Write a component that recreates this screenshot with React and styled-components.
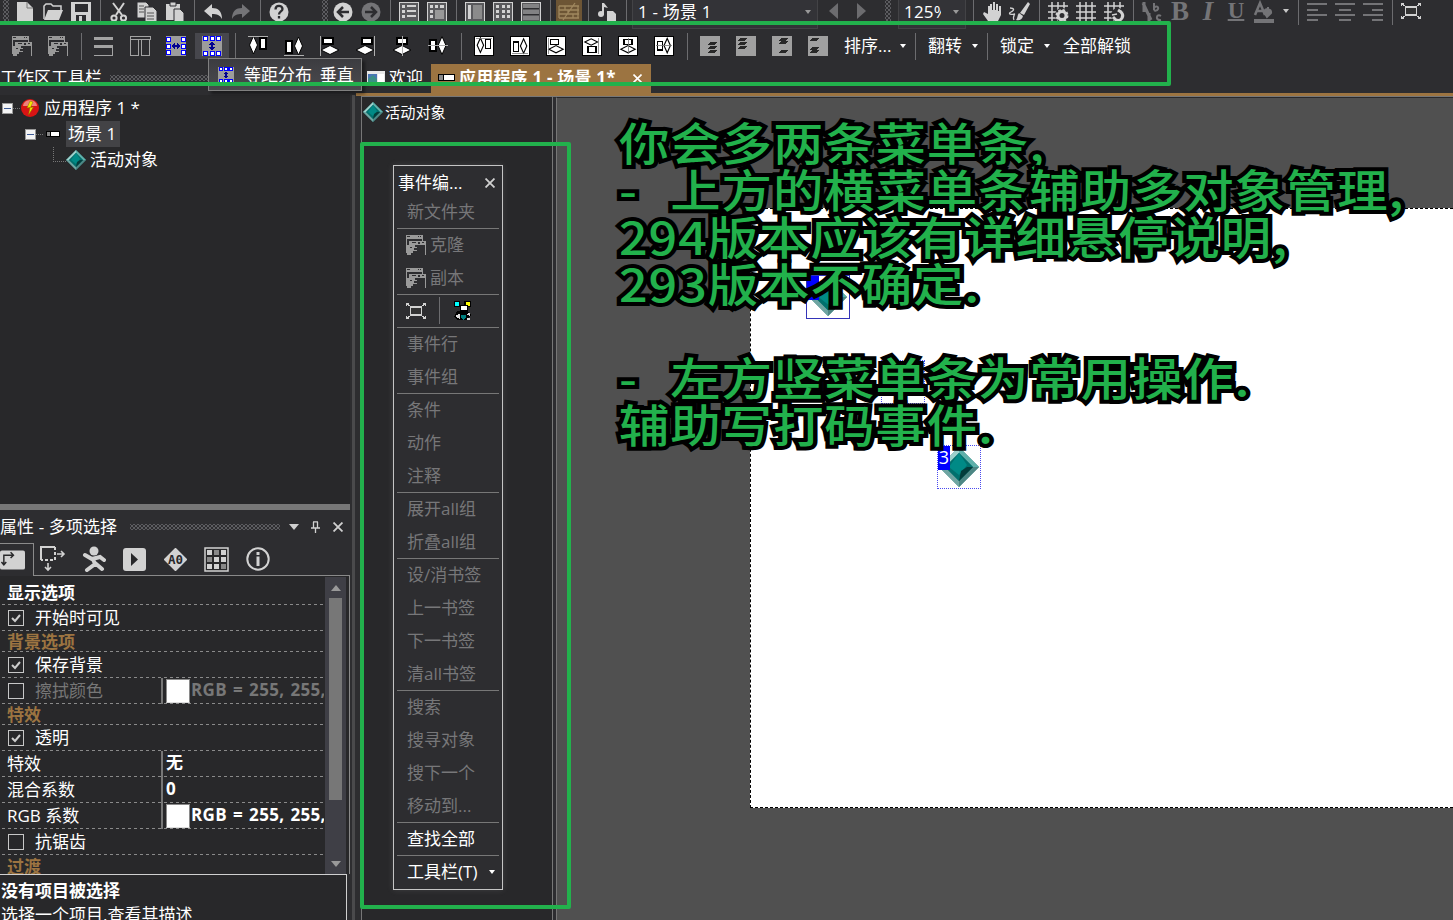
import React from 'react';
import styled, { createGlobalStyle, css } from 'styled-components';

const Global = createGlobalStyle`
  * { box-sizing: border-box; }
  html, body { margin: 0; padding: 0; overflow: hidden; }
  body {
    background: #2d2d30;
    color: #fff;
    font: 17px/24px "Open Sans", "Noto Sans CJK SC", sans-serif;
  }
`;

const GREEN = '#22b14c';
const LINE = '#777777';

const Window = styled.div`
  position: relative;
  width: 1453px;
  height: 920px;
  overflow: hidden;
  display: flex;
  flex-direction: column;
  background: #2d2d30;
  white-space: nowrap;
`;

/* ---------- toolbars ---------- */

const MainToolbar = styled.div`
  display: flex;
  align-items: center;
  gap: 8px;
  height: 26px;
  padding: 0 0 4px 3px;
  flex: none;
`;
const AlignToolbar = styled.div`
  display: flex;
  align-items: center;
  gap: 16px;
  height: 38px;
  padding: 2px 0 0 12px;
  flex: none;
`;
const sepMargins = { wide: '0 -4px', menu: '0 -4px 0 -8px', palette: '0 9px 0 8px' };
const Sep = styled.i`
  flex: none;
  width: 2px;
  height: 27px;
  border-right: 1px solid #6c6c6f;
  margin: ${(p) => sepMargins[p.$kind] || 0};
`;
const dots = css`
  background-image: radial-gradient(#5c5c60 0.8px, transparent 1px), radial-gradient(#5c5c60 0.8px, transparent 1px);
  background-size: 4px 4px;
  background-position: 0 0, 2px 2px;
`;
const Grip = styled.i`
  flex: none;
  width: 6px;
  height: 26px;
  margin-right: ${(p) => p.$after || 0}px;
  margin-left: ${(p) => p.$before || 0}px;
  ${dots}
`;
const Slot = styled.span`
  flex: none;
  display: flex;
  align-items: center;
  justify-content: center;
  width: 20px;
  height: 20px;
  ${(p) =>
    p.$active &&
    css`
      width: 34px;
      height: 26px;
      margin: 0 -7px;
      background: #47474d;
    `}
  ${(p) =>
    p.$pressed &&
    css`
      width: 26px;
      height: 24px;
      margin: 0 -3px;
      background: #6d5535;
    `}
  svg { display: block; flex: none; overflow: visible; }
`;
const Combo = styled.div`
  flex: none;
  display: flex;
  align-items: center;
  justify-content: space-between;
  width: ${(p) => p.$width}px;
  height: 30px;
  margin: 5px ${(p) => p.$after || 0}px 0 ${(p) => p.$before || 0}px;
  padding: 0 6px 3px 5px;
  border: 1px solid #434346;
  background: #333337;
`;
const ComboText = styled.span`
  overflow: hidden;
  letter-spacing: 0.2px;
  max-width: ${(p) => p.$clip || 200}px;
`;
const Caret = styled.i`
  flex: none;
  width: 0;
  border: ${(p) => p.$size || 3}px solid transparent;
  border-bottom: 0;
  border-top: ${(p) => p.$h || 4}px solid ${(p) => p.$color || '#fff'};
  margin: 0 ${(p) => p.$after || 0}px 0 ${(p) => p.$gap || 0}px;
`;
const Arrow = styled.i`
  flex: none;
  border: 8px solid transparent;
  border-${(p) => p.$side}: 9px solid #6c6c6f;
  border-${(p) => (p.$side === 'right' ? 'left' : 'right')}: 0;
  margin: 0 ${(p) => p.$after}px 0 ${(p) => p.$before}px;
`;
const MenuButton = styled.span`
  flex: none;
  display: flex;
  align-items: center;
  width: ${(p) => p.$width}px;
  margin-left: ${(p) => p.$shift || 0}px;
  justify-content: space-between;
`;
const Letter = styled.span`
  width: 20px;
  height: 24px;
  text-align: center;
  font: ${(p) => p.$italic && 'italic'} bold 27px/24px "Liberation Serif", serif;
  text-decoration: ${(p) => (p.$under ? 'underline' : 'none')};
  text-decoration-thickness: 2px;
  font-size: ${(p) => (p.$under ? 23 : 27)}px;
  color: #747477;
`;

/* ---------- body ---------- */

const Body = styled.div`
  display: flex;
  flex: 1;
  min-height: 0;
`;
const LeftDock = styled.div`
  width: 356px;
  flex: none;
  display: flex;
  flex-direction: column;
`;
const DockTitle = styled.div`
  height: 31px;
  display: flex;
  align-items: center;
  padding-bottom: 4px;
  gap: 8px;
`;
const Dots = styled.i`
  width: ${(p) => p.$width}px;
  height: 6px;
  ${dots}
`;
const DockBody = styled.div`
  display: flex;
  flex-direction: column;
  flex: 1;
  min-height: 0;
  padding-right: 2px;
  margin-right: 1px;
  border-right: 3px solid #4a4a4c;
`;
const Tree = styled.div`
  height: 409px;
  flex: none;
  background: #28282a;
`;
const TreeRow = styled.div`
  display: flex;
  align-items: center;
  height: 26px;
  padding-left: ${(p) => p.$indent}px;
`;
const TreeText = styled.span`
  padding: 0 4px 0 2px;
  margin-left: ${(p) => (p.$selected ? 3 : 2)}px;
  height: 26px;
  line-height: 25px;
  background: ${(p) => (p.$selected ? '#434346' : 'none')};
`;
const Expander = styled.i`
  width: 11px;
  height: 11px;
  border: 1px solid #999;
  background: linear-gradient(#3c5a96, #3c5a96) center / 7px 1px no-repeat, #f4f4f4;
`;
const Dotted = styled.i`
  width: ${(p) => p.$w}px;
  border-top: 1px dotted #777;
`;
const Elbow = styled.i`
  width: 13px;
  height: 15px;
  margin-top: -12px;
  border: dotted #777;
  border-width: 0 0 1px 1px;
`;
const TreeIcon = styled.span`
  display: flex;
  justify-content: center;
  width: 20px;
`;
const Splitter = styled.div`
  height: 6px;
  flex: none;
  background: #777;
`;
const PropTitle = styled.div`
  height: 33px;
  flex: none;
  display: flex;
  align-items: center;
  letter-spacing: 0.1px;
`;
const TitleTools = styled.span`
  display: flex;
  align-items: center;
  gap: 13px;
  margin-left: auto;
  padding-right: 7px;
`;
const PropTabs = styled.div`
  height: 33px;
  flex: none;
  display: flex;
  align-items: flex-end;
`;
const PropTab = styled.span`
  width: ${(p) => (p.$first ? 34 : 41)}px;
  height: 33px;
  display: flex;
  align-items: center;
  justify-content: center;
  border: solid #8a8a8a;
  border-width: ${(p) => (p.$first ? '1px 1px 0 0' : '0 0 1px 0')};
  padding-right: ${(p) => (p.$first ? 8 : 4)}px;
`;
const TabRest = styled.span`
  flex: 1;
  height: 33px;
  border-bottom: 1px solid #8a8a8a;
`;
const PropArea = styled.div`
  height: 298px;
  flex: none;
  display: flex;
  background: #28282a;
  border-right: 1px solid #8a8a8a;
  padding-top: 1px;
  overflow: hidden;
`;
const PropList = styled.div`
  width: 324px;
  overflow: hidden;
  padding: 3px 0 0 2px;
`;
const PropRow = styled.div`
  display: flex;
  align-items: center;
  height: ${(p) => p.$h}px;
  padding-left: 5px;
  background: repeating-linear-gradient(90deg, #8a8a8a 0 3px, transparent 3px 6px) bottom left / 100% 1px no-repeat;
  color: ${(p) => p.$color || '#fff'};
  font-weight: ${(p) => (p.$head ? 700 : 400)};
`;
const PropName = styled.span`
  width: ${(p) => (p.$check ? 126 : 154)}px;
  flex: none;
`;
const Check = styled.i`
  width: 16px;
  height: 16px;
  margin: 0 11px 0 1px;
  flex: none;
  border: 1px solid #c8c8c8;
  svg { display: block; }
`;
const PropValue = styled.span`
  display: flex;
  align-items: center;
  height: 26px;
  padding: 0 0 2px 3px;
  border-left: 2px solid #777;
  font-weight: 700;
  letter-spacing: 0.3px;
  word-spacing: 1.4px;
  flex: 1;
  overflow: hidden;
`;
const Swatch = styled.i`
  width: 24px;
  height: 24px;
  flex: none;
  margin: 2px 1px 0 0;
  background: #fff;
  border: 1px solid #8a8a8a;
  border-bottom-color: #ddd;
`;
const ScrollBar = styled.div`
  width: 21px;
  margin-left: 1px;
  background: #3f3f46;
  display: flex;
  flex-direction: column;
  align-items: center;
  padding: 8px 0;
`;
const Thumb = styled.div`
  width: 13px;
  height: 202px;
  margin: 7px 0 61px;
  flex: none;
  background: #777;
`;
const ArrowUp = styled.i`
  border: 5px solid transparent;
  border-top: 0;
  border-bottom: 6px solid #999;
`;
const Help = styled.div`
  flex: 1;
  width: 347px;
  border: solid #d0d0d0;
  border-width: 1px 1px 0 0;
  background: #28282a;
  padding: 4px 0 0 1px;
`;
const HelpTitle = styled.div`
  font-weight: 700;
  height: 24px;
`;

/* ---------- documents ---------- */

const Documents = styled.div`
  flex: 1;
  min-width: 0;
  display: flex;
  flex-direction: column;
`;
const Tabs = styled.div`
  height: 32px;
  flex: none;
  display: flex;
  border-bottom: 3px solid #9c7441;
`;
const Tab = styled.div`
  display: flex;
  align-items: center;
  width: ${(p) => p.$width}px;
  padding: 0 9px 1px ${(p) => (p.$active ? 7 : 11)}px;
  gap: 4px;
  background: ${(p) => (p.$active ? '#9c7441' : 'none')};
  font-weight: ${(p) => (p.$active ? 700 : 400)};
  letter-spacing: ${(p) => (p.$active ? 0.2 : 0)}px;
  svg { flex: none; }
`;
const TabClose = styled.span`
  margin-left: auto;
  display: flex;
`;
const Panes = styled.div`
  display: flex;
  flex: 1;
  border-top: 1px solid ${LINE};
  margin-left: 5px;
`;
const ObjectPane = styled.div`
  width: 192px;
  flex: none;
  border: solid ${LINE};
  border-width: 0 1px;
  background: #28282a;
`;
const ObjectItem = styled.div`
  display: flex;
  align-items: center;
  gap: 2px;
  height: 30px;
  padding-left: 1px;
  font-size: 15.2px;
`;
const Canvas = styled.div`
  flex: 1;
  margin-left: 3px;
  border-left: 1px solid ${LINE};
  border-top: 1px solid #29292b;
  background: #505050;
  padding: 110px 0 0 193px;
`;
const Frame = styled.div`
  position: relative;
  height: 600px;
  background: #fff;
  border: 1px dashed #000;
  border-right: 0;
`;
const Actor = styled.div`
  position: absolute;
  left: ${(p) => p.$x}px;
  top: ${(p) => p.$y}px;
  width: 44px;
  height: 44px;
  display: flex;
  align-items: center;
  justify-content: center;
  border: 1px ${(p) => (p.$strong ? 'solid #3434b8' : 'dotted #4a4aef')};
`;
const ActorNumber = styled.b`
  position: absolute;
  left: 0;
  top: 0;
  width: 12px;
  height: 24px;
  background: #0000ff;
  font: 18px/23px "Open Sans", sans-serif;
  text-align: center;
`;

/* ---------- floating parts ---------- */

const Tooltip = styled.div`
  position: absolute;
  left: 208px;
  top: 58px;
  width: 154px;
  height: 33px;
  display: flex;
  align-items: center;
  gap: 10px;
  padding-left: 9px;
  border: 1px solid #808080;
  background: linear-gradient(#3c3c40, #4a4a4e);
  box-shadow: 3px 3px 3px rgba(0, 0, 0, 0.4);
  white-space: pre;
  word-spacing: -0.5px;
`;
const Palette = styled.div`
  position: absolute;
  left: 393px;
  top: 165px;
  width: 110px;
  height: 725px;
  padding: 3px 3px 0;
  border: 1px solid #c4c4c4;
  background: #2d2d30;
  box-shadow: 0 0 6px rgba(160, 160, 160, 0.2);
`;
const PaletteTitle = styled.div`
  display: flex;
  align-items: center;
  justify-content: space-between;
  height: 28px;
  padding: 0 4px 0 1px;
`;
const PaletteItem = styled.div`
  display: flex;
  align-items: center;
  gap: 4px;
  height: ${(p) => (p.$first ? 31 : 33)}px;
  padding: 0 0 ${(p) => (p.$first ? 2 : 1)}px ${(p) => (p.$icon ? 9 : 10)}px;
  border-top: 1px solid ${(p) => (p.$line ? LINE : 'transparent')};
  color: ${(p) => (p.$on ? '#fff' : '#777779')};
`;
const Mark = styled.div`
  position: absolute;
  left: ${(p) => p.$x}px;
  top: ${(p) => p.$y}px;
  width: ${(p) => p.$w}px;
  height: ${(p) => p.$h}px;
  border: 4px solid ${GREEN};
  border-radius: 2px;
`;
const Note = styled.div`
  position: absolute;
  left: 619px;
  top: 118px;
  transform: scaleX(1.12);
  transform-origin: 0 0;
  white-space: pre;
  font: 500 45px/47px "Noto Sans CJK SC", sans-serif;
  letter-spacing: 0.8px;
  word-spacing: 18px;
  color: ${GREEN};
  -webkit-text-stroke: 8px #000;
  paint-order: stroke fill;
  text-shadow: 0 2px 1px rgba(0, 0, 0, 0.5);
`;

/* ---------- drawings ---------- */

const G = '#d2d2d2';
const D = '#747477';
const svg = (children, props = {}) => (
  <svg width="20" height="20" viewBox="0 0 20 20" fill="none" {...props}>{children}</svg>
);

const NewDoc = () => svg(<><path d="M2 1h10l6 6v14H2z" fill={G} /><path d="M12 1v6h6" stroke="#777" /></>);
const Folder = () => svg(<><path d="M1 18V5l2-2h5l2 2h8v4" stroke={G} strokeWidth="1.5" /><path d="M5 9h15l-4 10H1z" fill={G} /></>);
const Save = () => svg(<><path d="M0 1h20v20H0z" fill={G} /><path d="M4 3h13v8H4zM5 14h10v6H5z" fill="#2d2d30" /><path d="M8 15h3v5H8z" fill={G} /></>);
const Cut = () => svg(<g stroke={G} strokeWidth="2"><path d="M4 2l9 12M15 2L7 14" /><circle cx="5" cy="17" r="2.6" /><circle cx="14.5" cy="17" r="2.6" /></g>);
const Copy = () => svg(<g fill={G} stroke="#2d2d30"><path d="M0 1h9l3 3v13H0z" /><path d="M8 6h8l4 4v11H8z" /><path d="M2 5h5M2 8h5M2 11h5M10 12h7M10 15h7M10 18h7" stroke="#555" /></g>);
const Paste = () => svg(<g fill={G}><path d="M1 3h14v6H9v10H1z" /><path d="M5 1h6v4H5z" stroke="#2d2d30" /><path d="M9 8h6l4 4v9H9z" stroke="#2d2d30" /></g>);
const Undo = ({ c = G, flip }) => svg(<path transform={flip ? 'translate(20 0) scale(-1 1)' : undefined} d="M1 10l8-7v4c6 0 10 3 10 11-2-4-5-5-10-5v4z" fill={c} />);
const Disc = ({ c = G, kind }) => svg(<>
  <circle cx="10" cy="11" r="9.5" fill={c} />
  {kind === 'help' && <path d="M6.5 8.5c0-5 7-4.500 7-.5 0 2.500-3.500 2.500-3.500 5.500M10 15v2.500" stroke="#2d2d30" strokeWidth="2.300" />}
  {kind === 'back' && <path d="M16 11H6M10 6l-5 5 5 5" stroke="#2d2d30" strokeWidth="2.500" />}
  {kind === 'next' && <path d="M4 11h10M10 6l5 5-5 5" stroke="#2d2d30" strokeWidth="2.500" />}
</>);
const Cells = ({ kind }) => svg(<g shapeRendering="crispEdges">
  <rect x=".5" y="1.500" width="19" height="19" fill="#59595c" stroke={G} />
  {kind === 'list' && <path d="M3 4h3v3H3zM3 9h3v3H3zM3 14h3v3H3zM8 4h9v2H8zM8 9h9v2H8zM8 14h9v2H8z" fill={G} />}
  {kind === 'frame' && <><path d="M3 4h3v3H3zM3 9h3v3H3zM3 14h3v3H3zM8 4h3v3H8zM13 4h4v3h-4z" fill={G} /><path d="M8 9h9v9H8z" fill="#999" /></>}
  {kind === 'side' && <><path d="M3 4h3v14H3z" fill={G} /><path d="M8 4h9v14H8z" fill="#8b8b8b" /></>}
  {kind === 'grid' && <path d="M3 4h3v3H3zM9 4h3v3H9zM14 4h3v3h-3zM3 9h3v3H3zM9 9h3v3H9zM14 9h3v3h-3zM3 14h3v3H3zM9 14h3v3H9zM14 14h3v3h-3z" fill={G} />}
  {kind === 'rows' && <><path d="M2 3h16v4H2zM2 9h16v4H2zM2 15h16v4H2z" fill="#828284" /><path d="M2 7.500h16M2 13.500h16" stroke="#2d2d30" /></>}
</g>);
const Score = () => svg(<path d="M0 5h20M0 9h20M0 13h20M0 17h20M0 5v12M6 5v4M9 9v4M14 13v4M19 5v12M4 19L16 2" stroke="#a0885f" strokeWidth="1.300" />);
const Music = () => svg(<g fill={G}><circle cx="4" cy="13" r="3" /><path d="M5 2h2l4 5-4-1v8H5z" /><path d="M10 10h6l3 3v8h-9z" /></g>);
const Hand = () => svg(<path d="M5 20l-5-7 1-2 4 2V5h2V3h2v6h1V1h2v8h1V3h2v7h1V5h2v9l-3 6z" fill={G} transform="translate(1 0)" />);
const Brush = () => svg(<><path d="M18 1l2 2-6 11-4-2zM9 12l4 3c-1 4-4 5-7 4 2-2 1-5 3-7z" fill={G} /><path d="M0 7c4 0 5 2 1 4s1 3 3 2-2 3 0 6" stroke={G} strokeWidth="1.300" /></>);
const Hash = ({ kind }) => svg(<>
  <path d="M0 5h20M0 11h20M0 17h20M4 1v20M10 1v20M16 1v20" stroke={G} strokeWidth="1.500" />
  {kind === 'gear' && <><circle cx="14" cy="14" r="7" fill="#2d2d30" /><circle cx="14" cy="14.500" r="4" stroke={G} strokeWidth="3" /><circle cx="14" cy="14.500" r="5.500" stroke={G} strokeWidth="2" strokeDasharray="2.500 1.800" /></>}
  {kind === 'magnet' && <><circle cx="14" cy="14" r="7" fill="#2d2d30" /><path d="M9 16l3 3c5 2 9-4 5-8l-3-2" stroke={G} strokeWidth="3" /><path d="M8 14l5-1" stroke={G} strokeWidth="1.500" /></>}
</>);
const FontGlyph = () => svg(<><path d="M1 2l8 17M2 1v10M7 12v9" stroke={D} strokeWidth="3" /><path d="M12 2v7M12 7c2-3 5-1 4 1s-3 2-4 1M19 15c-5-3-6 5 0 4" stroke={D} strokeWidth="2" /></>);
const FontColor = () => svg(<><path d="M1 14L6 2l5 12M3 10h6" stroke={D} strokeWidth="2.500" /><path d="M14 6v4M10 11c0-4 8-4 7 1l-4 4z" stroke={D} fill={D} strokeWidth="2" /><path d="M0 18h20v4H0z" fill={D} /></>);
const TextLines = ({ k }) => svg(<path shapeRendering="crispEdges" stroke="#747477" strokeWidth="2" d={k === 'l' ? 'M0 3h20M0 9h11M0 14h20M0 19h11' : k === 'c' ? 'M0 3h20M4 9h12M0 14h20M4 19h12' : 'M0 3h20M9 9h11M0 14h20M9 19h11'} />);
const Expand = () => svg(<g stroke={G} shapeRendering="crispEdges"><rect x="4.500" y="6" width="11" height="8" fill="#333" strokeWidth="1.500" /><path d="M1 3l3 2M19 3l-3 2M1 17l3-2M19 17l-3-2M0 2.500h3M.5 2v3M20 2.500h-3M19.500 2v3M0 17.500h3M.5 18v-3M20 17.500h-3M19.500 18v-3" strokeWidth="1" /></g>);

const Clone = () => svg(<g shapeRendering="crispEdges">
  <path d="M0 0h17v6h-1V4H1v6H0zM3 6h17v14h-1V10H9v2h2v1H8v2h3v1H7v2H5v2H1v-2H0v-8h3z" fill="#999" />
  <path d="M1 1h3v1H1zM12 1h1v1h-1zM14 1h1v1h-1zM6 7h4v1H6zM12 7h2v2h-2zM16 7h2v1h-2zM4 12h2v1H4z" fill="#2d2d30" />
</g>);
const Rows = () => svg(<path shapeRendering="crispEdges" d="M0 1h19v3H0zM0 9h19v3H0zM0 19h19v1H0zM18 9h1v10h-1z" fill="#a3a3a3" />);
const Cols = () => svg(<path shapeRendering="crispEdges" d="M0 .5h20v3H0zM.5 3v16.500h8M8.500 3v16M11.500 3v16.500h8V3" stroke="#a3a3a3" />);
const Distribute = ({ v, size = 20 }) => (
  <svg width={size} height={size} viewBox="0 0 20 20" shapeRendering="crispEdges">
    <path d="M0 0h20v20H0z" fill="#9c9c9c" />
    {(v ? [[1, 0], [8, 0], [14, 0], [1, 15], [8, 15], [14, 15]] : [[0, 1], [0, 8], [0, 14], [15, 1], [15, 8], [15, 14]]).map(([x, y]) => (
      <rect key={`${x}-${y}`} x={x + 0.5} y={y + 0.5} width="4" height="4" fill="#fff" stroke="#00f" strokeWidth="1.300" />
    ))}
    <path transform={v ? 'rotate(90 10 10)' : undefined} d="M5 10l4-3v2h2V7l4 3-4 3v-2H9v2z" fill="#000090" />
  </svg>
);

const shapes = {
  top: { line: 'M0 .5h20', d: [5.5, 9, 4, 9], r: [12, 2, 6, 11] },
  bottom: { line: 'M0 19.500h20', d: [14.500, 10, 4, 9], r: [2, 5, 6, 12] },
  left: { line: 'M.5 0v20', d: [10, 14, 9, 4.500], r: [3, 2, 10, 6] },
  right: { line: 'M18.500 0v20', d: [9, 14, 9, 4.500], r: [6, 2, 10, 6] },
  rightBoxed: { line: 'M18.500 0v20', d: [9, 5, 8, 4], r: [5, 11, 10, 7] },
  centerX: { line: 'M10 0v20', d: [10, 14, 9, 4.500], r: [5, 2, 10, 6] },
  centerY: { line: 'M0 9.500h20', d: [14, 9.5, 4, 9], r: [2, 4, 6, 11] },
};
const Align = ({ kind, boxed }) => {
  const s = shapes[boxed && kind === 'right' ? 'rightBoxed' : kind];
  const [cx, cy, rx, ry] = s.d;
  const [x, y, w, h] = s.r;
  const body = (
    <>
      <path d={`M${cx - rx} ${cy}L${cx} ${cy - ry}L${cx + rx} ${cy}L${cx} ${cy + ry}z`} fill="#fff" stroke="#000" strokeWidth={boxed ? 1.400 : 1} shapeRendering="auto" />
      <rect x={x} y={y} width={w} height={h} fill="#fff" stroke="#000" strokeWidth={boxed ? 1.400 : 2} />
      <path d={s.line} stroke={boxed ? '#777' : '#b0b0b0'} />
    </>
  );
  return svg(boxed ? <><rect x=".5" y=".5" width="19" height="19" fill="#fff" stroke="#000" /><g transform="translate(2 2) scale(.8)">{body}</g></> : body, { shapeRendering: 'crispEdges' });
};
const Layer = ({ ys, x = 6 }) => svg(<g shapeRendering="crispEdges"><path d="M0 0h20v20H0z" fill="#a0a0a0" />
  {ys.map((y) => <path key={y} d={`M${x + 2} ${y}h7l-2 3h-7z`} fill="#282828" />)}</g>);

const Gem = ({ size = 20 }) => (
  <svg width={size} height={size} viewBox="0 0 20 20">
    <path d="M10 0L0 10l10 10 10-10z" fill="#287b78" />
    <path d="M10 0L0 10h3l7-7z" fill="#9cd0cb" /><path d="M10 0l10 10h-3l-7-7z" fill="#5fb0aa" />
    <path d="M0 10l10 10v-3L3 10z" fill="#6fa5a2" /><path d="M20 10L10 20v-3l7-7z" fill="#4d8684" />
    <path d="M10 3l7 7-7 7-7-7z" fill="#00706d" /><path d="M10 3l4 6-4 5-5-4z" fill="#008a86" /><path d="M10 17l1-5 3-2h3z" fill="#043c3b" />
  </svg>
);
const Bolt = () => (
  <svg width="18" height="18" viewBox="0 0 18 18"><circle cx="9" cy="9" r="9" fill="#d81414" /><path d="M2 7a7 6 0 0114 0z" fill="#f0807a" /><path d="M9 2L6 9l3-.5L7.500 16l5-8-3 .5L12 3z" fill="#f3e600" stroke="#8a6a00" strokeWidth=".5" /></svg>
);
const Scene = ({ w = 14 }) => (
  <svg width={w} height={w * 0.43} viewBox="0 0 14 6" shapeRendering="crispEdges"><path d="M0 0h14v6H0z" fill="#000" /><path d="M1 1h3v4H1z" fill="#888" /><path d="M5 1h8v4H5z" fill="#fff" /></svg>
);
const Cross = ({ size = 9, c = '#d0d0d0' }) => (
  <svg width={size} height={size} viewBox="0 0 9 9"><path d="M.5 .5l8 8M8.500 .5l-8 8" stroke={c} strokeWidth="1.600" /></svg>
);
const Pin = () => (
  <svg width="9" height="12" viewBox="0 0 9 12" fill="none"><path d="M2 .8h5M2.500 1v6M6.500 1v6M0 7h9M4.500 7v5" stroke={G} strokeWidth="1.300" /></svg>
);
const Welcome = () => (
  <svg width="18" height="15" viewBox="0 0 18 15"><path d="M0 0h18v15H0z" fill="#e8e8e8" /><path d="M1 3h9v11H1z" fill="#3b8f86" /><path d="M11 3h6v11h-6z" fill="#fff" /><path d="M1 8l5-4 4 4v-5H1z" fill="#4a76b5" /></svg>
);
const Editor = () => svg(<g shapeRendering="crispEdges"><path d="M1 0h6v6H1zM11 0h7v6h-7z" fill="#000" /><path d="M2 1h4v4H2z" fill="#0ff" /><path d="M13 1h4v4h-4z" fill="#ff0" /><path d="M7 4h7v5H7z" fill="#fff" stroke="#000" /><path d="M4 10h10l4 4-3 5H5l-4-3z" fill="#000" /><path d="M3 14l4-1v5l-3-1zM13 13l4-1v3zM14 17h3v2h-3z" fill="#ddd" /><path d="M8 14h5v2l-3 3-2-3z" fill="#007f7f" /></g>);

const tabIcons = [
  <svg key="0" width="26" height="20" viewBox="0 0 26 20"><rect width="26" height="20" rx="2" fill={G} /><path d="M4 15V5h10M11 2l3 3-3 3M1.500 12L4 15l2.500-3" stroke="#28282a" fill="none" strokeWidth="1.500" /></svg>,
  <svg key="1" width="26" height="26" viewBox="0 0 26 26" fill="none" stroke={G} strokeWidth="2"><path d="M1 14V1h14" /><path d="M15 1v13H1" strokeDasharray="3 2" /><path d="M17 8h7M21 5l3 3-3 3M8 17v7M5 21l3 3 3-3" strokeWidth="1.600" /></svg>,
  <svg key="2" width="24" height="26" viewBox="0 0 24 26"><circle cx="12" cy="5" r="4.500" fill={G} /><path d="M3 9l7 4 8-2 4 3M11 13l2 5-8 6M13 17l7 6" stroke={G} strokeWidth="4" fill="none" strokeLinecap="round" /></svg>,
  <svg key="3" width="23" height="23" viewBox="0 0 23 23"><rect width="23" height="23" rx="3" fill={G} /><path d="M8 5l7 6.500L8 18z" fill="#28282a" /></svg>,
  <svg key="4" width="23" height="23" viewBox="0 0 23 23"><path d="M11.500 1L22 11.500 11.500 22 1 11.500z" fill={G} stroke={G} strokeWidth="2" strokeLinejoin="round" /><text x="11.500" y="15.500" textAnchor="middle" fontFamily="DejaVu Sans Mono" fontWeight="700" fontSize="12.500" fill="#28282a">A0</text></svg>,
  <svg key="5" width="25" height="25" viewBox="0 0 25 25"><rect x="1" y="1" width="23" height="23" fill="#28282a" stroke={G} strokeWidth="1.500" />{[3, 10, 17].map((y) => [3, 10, 17].map((x) => <rect key={`${x}${y}`} x={x} y={y} width="5" height="5" fill={(x === 10 && y === 3) || (x === 3 && y === 10) || (x === 17 && y === 17) ? '#888' : G} />))}</svg>,
  <svg key="6" width="24" height="24" viewBox="0 0 24 24" fill="none"><circle cx="12" cy="12" r="10.700" stroke={G} strokeWidth="2" /><path d="M12 9.500V19M12 5v3" stroke={G} strokeWidth="3" /></svg>,
];

const GOLD = '#9c7441';
const props = [
  { h: 25, head: '显示选项', color: '#fff' },
  { h: 26, check: 1, name: '开始时可见' },
  { h: 21, head: '背景选项', color: GOLD },
  { h: 26, check: 1, name: '保存背景' },
  { h: 26, check: 0, name: '擦拭颜色', color: '#777', value: 'RGB = 255, 255,', swatch: true },
  { h: 21, head: '特效', color: GOLD },
  { h: 26, check: 1, name: '透明' },
  { h: 26, name: '特效', value: '无' },
  { h: 26, name: '混合系数', value: '0' },
  { h: 26, name: 'RGB 系数', value: 'RGB = 255, 255,', swatch: true },
  { h: 26, check: 0, name: '抗锯齿' },
  { h: 24, head: '过渡', color: GOLD },
];

const events = [
  ['事件行', 1], ['事件组'], ['条件', 1], ['动作'], ['注释'], ['展开all组', 1], ['折叠all组'],
  ['设/消书签', 1], ['上一书签'], ['下一书签'], ['清all书签'], ['搜索', 1], ['搜寻对象'], ['搜下一个'], ['移动到...'],
];

const note = `你会多两条菜单条,
- 上方的横菜单条辅助多对象管理,
294版本应该有详细悬停说明,
293版本不确定.

- 左方竖菜单条为常用操作.
辅助写打码事件.`;

const kinds = ['top', 'bottom', 'left', 'right', 'centerX', 'centerY'];

export default function App() {
  return (
    <Window>
      <Global />
      <MainToolbar>
        <Grip $after={-2} />
        <Slot><NewDoc /></Slot><Slot><Folder /></Slot><Slot><Save /></Slot>
        <Sep />
        <Slot><Cut /></Slot><Slot><Copy /></Slot><Slot><Paste /></Slot>
        <Sep />
        <Slot><Undo /></Slot><Slot><Undo c={D} flip /></Slot>
        <Sep />
        <Slot><Disc kind="help" /></Slot>
        <Grip $before={25} $after={-3} />
        <Slot><Disc kind="back" /></Slot><Slot><Disc kind="next" c={D} /></Slot>
        <Sep />
        <Slot><Cells kind="list" /></Slot><Slot><Cells kind="frame" /></Slot>
        <Sep />
        <Slot><Cells kind="side" /></Slot><Slot><Cells kind="grid" /></Slot><Slot><Cells kind="rows" /></Slot>
        <Sep />
        <Slot $pressed><Score /></Slot>
        <Sep />
        <Slot><Music /></Slot>
        <Sep />
        <Combo $width={186} $before={-3}><ComboText>1 - 场景 1</ComboText><Caret $color="#999" /></Combo>
        <Arrow $side="right" $before={3} $after={3} />
        <Arrow $side="left" $before={8} $after={9} />
        <Grip $before={2} />
        <Combo $width={68} $before={-1} $after={-2}><ComboText $clip={37}>125%</ComboText><Caret $color="#999" /></Combo>
        <Sep />
        <Slot><Hand /></Slot><Slot><Brush /></Slot>
        <Sep />
        <Slot><Hash kind="gear" /></Slot><Slot><Hash /></Slot><Slot><Hash kind="magnet" /></Slot>
        <Sep />
        <Slot><FontGlyph /></Slot><Letter>B</Letter><Letter $italic>I</Letter><Letter $under>U</Letter>
        <Slot><FontColor /></Slot>
        <Caret $color="#c8c8c8" $gap={1} />
        <Sep />
        <Slot><TextLines k="l" /></Slot><Slot><TextLines k="c" /></Slot><Slot><TextLines k="r" /></Slot>
        <Sep />
        <Slot><Expand /></Slot>
      </MainToolbar>

      <AlignToolbar>
        <Slot><Clone /></Slot><Slot><Clone /></Slot>
        <Sep $kind="wide" />
        <Slot><Rows /></Slot><Slot><Cols /></Slot><Slot><Distribute /></Slot>
        <Slot $active><Distribute v /></Slot>
        <Sep $kind="wide" />
        {kinds.map((k) => <Slot key={k}><Align kind={k} /></Slot>)}
        <Sep $kind="wide" />
        {kinds.map((k) => <Slot key={k}><Align kind={k} boxed /></Slot>)}
        <Sep $kind="wide" />
        <Slot><Layer ys={[6, 10, 14]} x={8} /></Slot>
        <Slot><Layer ys={[2, 6, 10]} x={2} /></Slot>
        <Slot><Layer ys={[2, 5, 14]} x={7} /></Slot>
        <Slot><Layer ys={[2, 11, 14]} x={2} /></Slot>
        <MenuButton $width={62}>排序...<Caret /></MenuButton>
        <Sep $kind="menu" />
        <MenuButton $width={50}>翻转<Caret /></MenuButton>
        <Sep $kind="menu" />
        <MenuButton $width={50}>锁定<Caret /></MenuButton>
        <MenuButton $width={70} $shift={-3}>全部解锁</MenuButton>
      </AlignToolbar>

      <Body>
        <LeftDock>
          <DockTitle><span>工作区工具栏</span><Dots $width={230} /></DockTitle>
          <DockBody>
            <Tree>
              <TreeRow $indent={2}><Expander /><Dotted $w={7} /><TreeIcon><Bolt /></TreeIcon><TreeText>应用程序 1 *</TreeText></TreeRow>
              <TreeRow $indent={25}><Expander /><Dotted $w={7} /><TreeIcon><Scene /></TreeIcon><TreeText $selected>场景 1</TreeText></TreeRow>
              <TreeRow $indent={53}><Elbow /><TreeIcon><Gem /></TreeIcon><TreeText>活动对象</TreeText></TreeRow>
            </Tree>
            <Splitter />
            <PropTitle>
              <span>属性 - 多项选择</span>
              <TitleTools>
                <Dots $width={150} />
                <Caret $size={5} $h={6} $after={-1} $gap={-4} $color="#d0d0d0" />
                <Pin />
                <Cross size={10} />
              </TitleTools>
            </PropTitle>
            <PropTabs>
              {tabIcons.map((icon, i) => <PropTab key={icon.key} $first={i === 0}>{icon}</PropTab>)}
              <TabRest />
            </PropTabs>
            <PropArea>
              <PropList>
                {props.map((p, i) => (
                  <PropRow key={i} $h={p.h} $color={p.color} $head={p.head}>
                    {p.head}
                    {p.check !== undefined && (
                      <Check>{p.check === 1 && <svg width="14" height="14" viewBox="0 0 14 14"><path d="M3 7l3 3 5-6" fill="none" stroke="#ccc" strokeWidth="2" /></svg>}</Check>
                    )}
                    {p.name && <PropName $check={p.check !== undefined}>{p.name}</PropName>}
                    {p.value && <PropValue>{p.swatch && <Swatch />}{p.value}</PropValue>}
                  </PropRow>
                ))}
              </PropList>
              <ScrollBar><ArrowUp /><Thumb /><Caret $size={5} $h={6} $color="#999" /></ScrollBar>
            </PropArea>
            <Help>
              <HelpTitle>没有项目被选择</HelpTitle>
              选择一个项目,查看其描述
            </Help>
          </DockBody>
        </LeftDock>

        <Documents>
          <Tabs>
            <Tab $width={75}><Welcome />欢迎</Tab>
            <Tab $width={220} $active><Scene w={17} />应用程序 1 - 场景 1*<TabClose><Cross c="#fff" /></TabClose></Tab>
          </Tabs>
          <Panes>
            <ObjectPane><ObjectItem><Gem />活动对象</ObjectItem></ObjectPane>
            <Canvas>
              <Frame>
                <Actor $x={55} $y={66} $strong><Gem size={38} /><ActorNumber /></Actor>
                <Actor $x={130} $y={151} />
                <Actor $x={186} $y={236}><Gem size={40} /><ActorNumber>3</ActorNumber></Actor>
              </Frame>
            </Canvas>
          </Panes>
        </Documents>
      </Body>

      <Palette>
        <PaletteTitle>事件编...<Cross size={10} /></PaletteTitle>
        <PaletteItem $first>新文件夹</PaletteItem>
        <PaletteItem $line $icon><Clone />克隆</PaletteItem>
        <PaletteItem $icon><Clone />副本</PaletteItem>
        <PaletteItem $line $icon><Expand /><Sep $kind="palette" /><Editor /></PaletteItem>
        {events.map(([t, line]) => <PaletteItem key={t} $line={line}>{t}</PaletteItem>)}
        <PaletteItem $line $on>查找全部</PaletteItem>
        <PaletteItem $line $on>工具栏(T)<Caret $gap={8} /></PaletteItem>
      </Palette>

      <Tooltip><Distribute v size={16} />等距分布  垂直</Tooltip>
      <Note>{note}</Note>
      <Mark $x={-6} $y={21} $w={1177} $h={65} />
      <Mark $x={360} $y={142} $w={211} $h={767} />
    </Window>
  );
}
